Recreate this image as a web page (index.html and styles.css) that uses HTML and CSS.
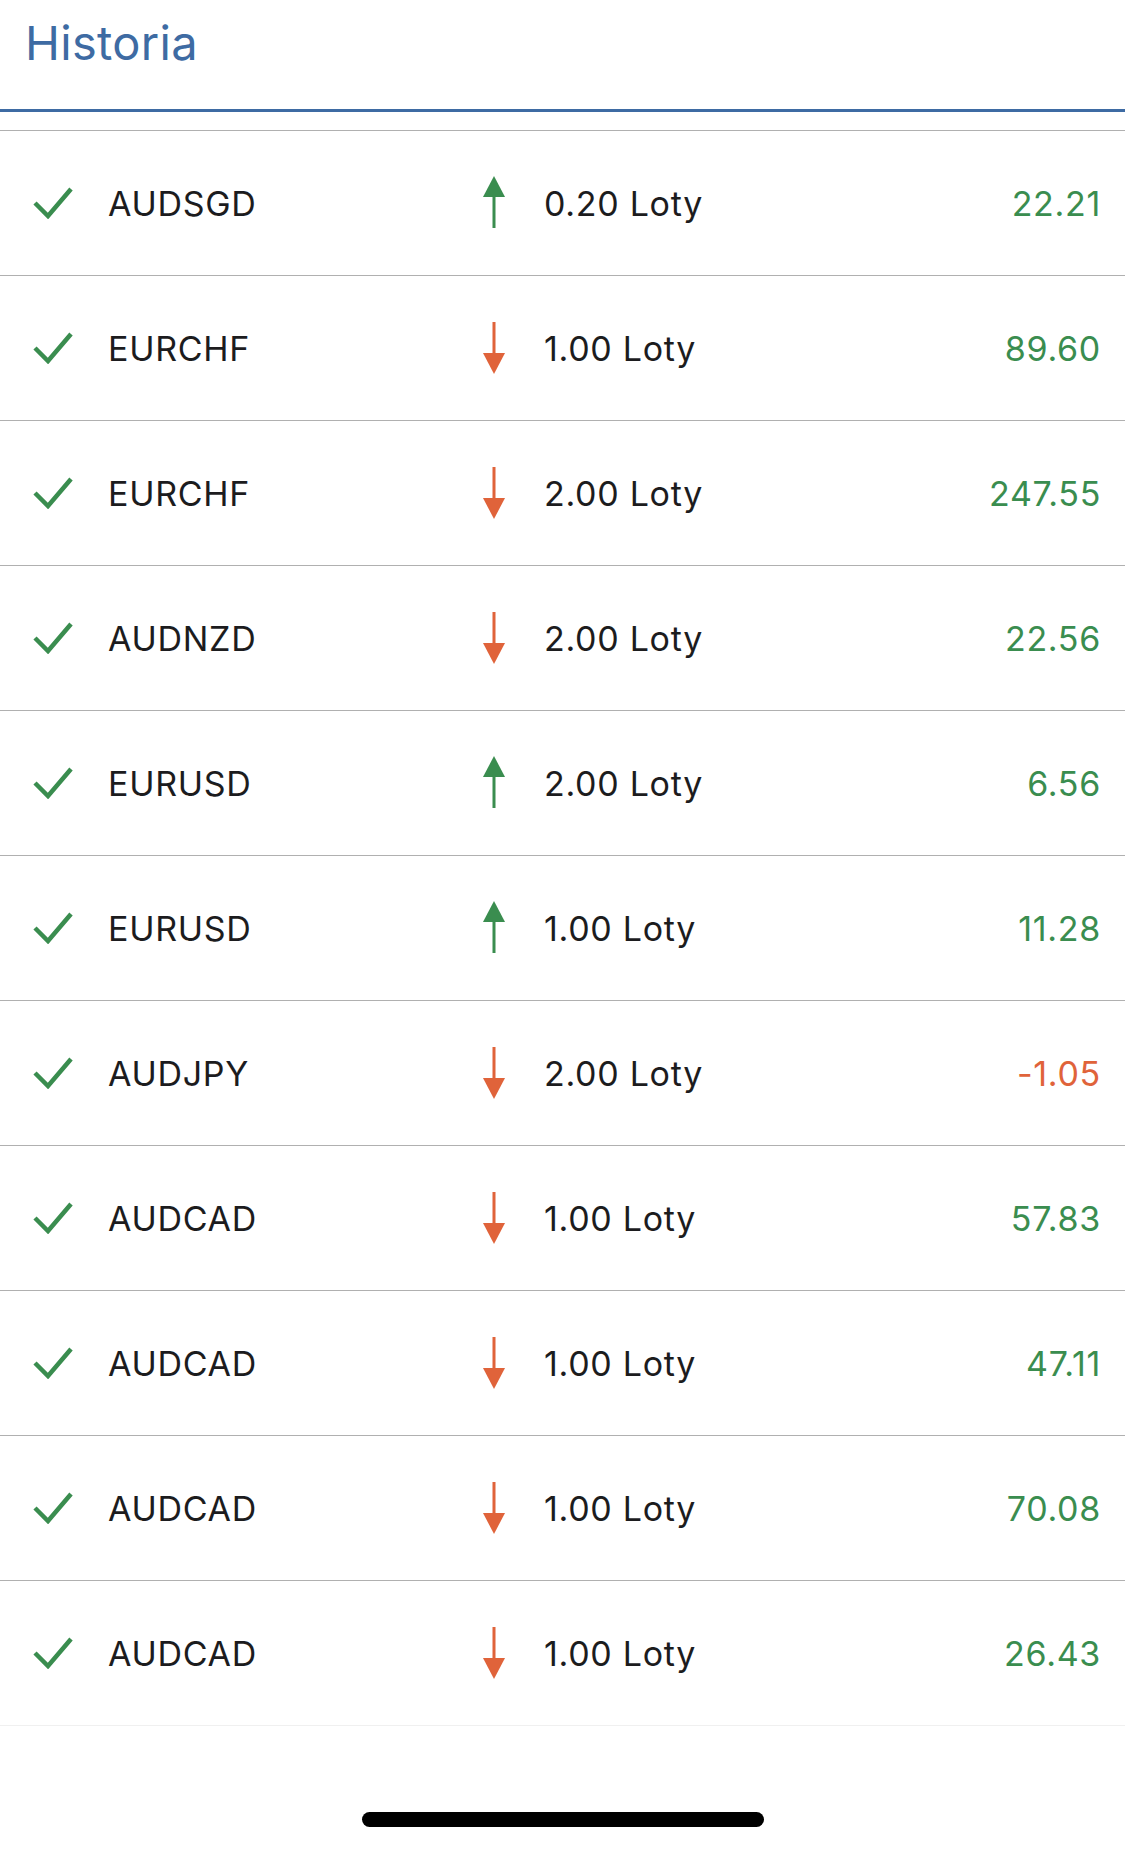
FILE: index.html
```html
<!DOCTYPE html>
<html lang="pl">
<head>
<meta charset="utf-8">
<title>Historia</title>
<link rel="stylesheet" href="styles.css">
</head>
<body>
<div class="screen">
  <header class="header">
    <h1 class="title">Historia</h1>
  </header>
  <ul class="list">
    <li class="row">
      <svg class="check" viewBox="0 0 40 32"><polyline points="2,16 15,29 38,2"/></svg>
      <span class="symbol">AUDSGD</span>
      <svg class="arrow up" viewBox="0 0 22 52"><polygon points="0,21 11,0 22,21"/><rect x="9.5" y="18" width="3" height="34"/></svg>
      <span class="lots">0.20 Loty</span>
      <span class="value pos">22.21</span>
    </li>
    <li class="row">
      <svg class="check" viewBox="0 0 40 32"><polyline points="2,16 15,29 38,2"/></svg>
      <span class="symbol">EURCHF</span>
      <svg class="arrow down" viewBox="0 0 22 52"><rect x="9.5" y="0" width="3" height="34"/><polygon points="0,31 11,52 22,31"/></svg>
      <span class="lots">1.00 Loty</span>
      <span class="value pos">89.60</span>
    </li>
    <li class="row">
      <svg class="check" viewBox="0 0 40 32"><polyline points="2,16 15,29 38,2"/></svg>
      <span class="symbol">EURCHF</span>
      <svg class="arrow down" viewBox="0 0 22 52"><rect x="9.5" y="0" width="3" height="34"/><polygon points="0,31 11,52 22,31"/></svg>
      <span class="lots">2.00 Loty</span>
      <span class="value pos">247.55</span>
    </li>
    <li class="row">
      <svg class="check" viewBox="0 0 40 32"><polyline points="2,16 15,29 38,2"/></svg>
      <span class="symbol">AUDNZD</span>
      <svg class="arrow down" viewBox="0 0 22 52"><rect x="9.5" y="0" width="3" height="34"/><polygon points="0,31 11,52 22,31"/></svg>
      <span class="lots">2.00 Loty</span>
      <span class="value pos">22.56</span>
    </li>
    <li class="row">
      <svg class="check" viewBox="0 0 40 32"><polyline points="2,16 15,29 38,2"/></svg>
      <span class="symbol">EURUSD</span>
      <svg class="arrow up" viewBox="0 0 22 52"><polygon points="0,21 11,0 22,21"/><rect x="9.5" y="18" width="3" height="34"/></svg>
      <span class="lots">2.00 Loty</span>
      <span class="value pos">6.56</span>
    </li>
    <li class="row">
      <svg class="check" viewBox="0 0 40 32"><polyline points="2,16 15,29 38,2"/></svg>
      <span class="symbol">EURUSD</span>
      <svg class="arrow up" viewBox="0 0 22 52"><polygon points="0,21 11,0 22,21"/><rect x="9.5" y="18" width="3" height="34"/></svg>
      <span class="lots">1.00 Loty</span>
      <span class="value pos">11.28</span>
    </li>
    <li class="row">
      <svg class="check" viewBox="0 0 40 32"><polyline points="2,16 15,29 38,2"/></svg>
      <span class="symbol">AUDJPY</span>
      <svg class="arrow down" viewBox="0 0 22 52"><rect x="9.5" y="0" width="3" height="34"/><polygon points="0,31 11,52 22,31"/></svg>
      <span class="lots">2.00 Loty</span>
      <span class="value neg">-1.05</span>
    </li>
    <li class="row">
      <svg class="check" viewBox="0 0 40 32"><polyline points="2,16 15,29 38,2"/></svg>
      <span class="symbol">AUDCAD</span>
      <svg class="arrow down" viewBox="0 0 22 52"><rect x="9.5" y="0" width="3" height="34"/><polygon points="0,31 11,52 22,31"/></svg>
      <span class="lots">1.00 Loty</span>
      <span class="value pos">57.83</span>
    </li>
    <li class="row">
      <svg class="check" viewBox="0 0 40 32"><polyline points="2,16 15,29 38,2"/></svg>
      <span class="symbol">AUDCAD</span>
      <svg class="arrow down" viewBox="0 0 22 52"><rect x="9.5" y="0" width="3" height="34"/><polygon points="0,31 11,52 22,31"/></svg>
      <span class="lots">1.00 Loty</span>
      <span class="value pos">47.11</span>
    </li>
    <li class="row">
      <svg class="check" viewBox="0 0 40 32"><polyline points="2,16 15,29 38,2"/></svg>
      <span class="symbol">AUDCAD</span>
      <svg class="arrow down" viewBox="0 0 22 52"><rect x="9.5" y="0" width="3" height="34"/><polygon points="0,31 11,52 22,31"/></svg>
      <span class="lots">1.00 Loty</span>
      <span class="value pos">70.08</span>
    </li>
    <li class="row last">
      <svg class="check" viewBox="0 0 40 32"><polyline points="2,16 15,29 38,2"/></svg>
      <span class="symbol">AUDCAD</span>
      <svg class="arrow down" viewBox="0 0 22 52"><rect x="9.5" y="0" width="3" height="34"/><polygon points="0,31 11,52 22,31"/></svg>
      <span class="lots">1.00 Loty</span>
      <span class="value pos">26.43</span>
    </li>
  </ul>
  <div class="home-bar"><span class="home-indicator"></span></div>
</div>
</body>
</html>
```
FILE: styles.css
```css
* { box-sizing: border-box; }
html, body {
  margin: 0;
  padding: 0;
  background: #ffffff;
}
body {
  font-family: Inter, "Noto Sans", "Liberation Sans", sans-serif;
  color: #1c1c1e;
}
.screen {
  width: 1125px;
  height: 1851px;
  display: flex;
  flex-direction: column;
  overflow: hidden;
}
.header {
  height: 112px;
  border-bottom: 3px solid #3e6ba3;
  padding: 13px 0 0 25px;
}
.title {
  margin: 0;
  font-size: 47px;
  font-weight: 400;
  line-height: 60px;
  letter-spacing: 0.3px;
  color: #3e6ba3;
}
.list {
  list-style: none;
  margin: 18px 0 0 0;
  padding: 0;
  border-top: 1px solid #b0b0b0;
}
.row {
  height: 145px;
  border-bottom: 1px solid #b0b0b0;
  display: flex;
  align-items: center;
  padding: 0 24px 0 33px;
  font-size: 34px;
  letter-spacing: 0.7px;
}
.row.last {
  border-bottom-color: #f0f0f0;
}
.check {
  width: 40px;
  height: 32px;
  flex: none;
  fill: none;
  stroke: #3a8d4f;
  stroke-width: 4.5;
}
.symbol {
  margin-left: 35px;
  width: 375px;
  flex: none;
}
.arrow {
  width: 22px;
  height: 52px;
  flex: none;
}
.arrow.up { fill: #3a8d4f; margin-top: -2px; }
.arrow.down { fill: #e0633a; }
.lots {
  margin-left: 39px;
  flex: 1;
}
.value {
  text-align: right;
}
.value.pos { color: #3a8d4f; }
.value.neg { color: #e0633a; }
.home-bar {
  flex: 1;
  display: flex;
  justify-content: center;
  padding-top: 86px;
}
.home-indicator {
  width: 402px;
  height: 15px;
  border-radius: 8px;
  background: #000000;
}
```
